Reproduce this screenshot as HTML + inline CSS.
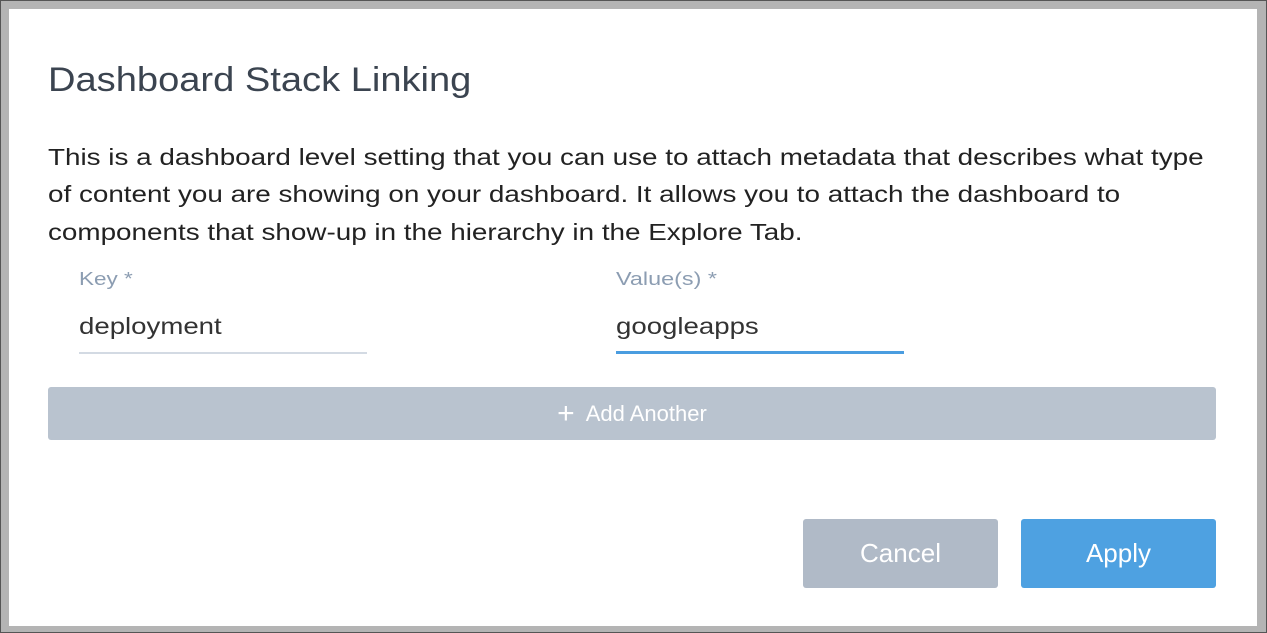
<!DOCTYPE html>
<html><head><style>
html,body{margin:0;padding:0;}
body{width:1267px;height:633px;background:#b4b4b4;position:relative;overflow:hidden;font-family:"Liberation Sans",sans-serif;}
.frame{position:absolute;left:0;top:0;width:1265px;height:631px;border:1px solid #555;}
.dlg{position:absolute;left:9px;top:9px;width:1248px;height:617px;background:#fff;}
.a{position:absolute;white-space:nowrap;transform-origin:0 0;}
</style></head><body>
<div class="frame"></div>
<div class="dlg"></div>
<div class="a" style="left:48px;top:61px;font-size:34px;color:#3b4450;transform:scaleX(1.12);">Dashboard Stack Linking</div>
<div class="a" style="left:48px;top:144px;font-size:23px;color:#222;transform:scaleX(1.21);">This is a dashboard level setting that you can use to attach metadata that describes what type</div>
<div class="a" style="left:48px;top:181px;font-size:23px;color:#222;transform:scaleX(1.21);">of content you are showing on your dashboard. It allows you to attach the dashboard to</div>
<div class="a" style="left:48px;top:219px;font-size:23px;color:#222;transform:scaleX(1.21);">components that show-up in the hierarchy in the Explore Tab.</div>
<div class="a" style="left:79px;top:269px;font-size:18px;color:#8c9db2;transform:scaleX(1.25);">Key *</div>
<div class="a" style="left:616px;top:269px;font-size:18px;color:#8c9db2;transform:scaleX(1.3);">Value(s) *</div>
<div class="a" style="left:79px;top:313px;font-size:23px;color:#333;transform:scaleX(1.2);">deployment</div>
<div class="a" style="left:616px;top:313px;font-size:23px;color:#333;transform:scaleX(1.2);">googleapps</div>
<div class="a" style="left:79px;top:352px;width:288px;height:2px;background:#d3dae3;"></div>
<div class="a" style="left:616px;top:351px;width:288px;height:3px;background:#4a9de0;"></div>
<div class="a" style="left:48px;top:387px;width:1168px;height:53px;background:#b9c3cf;border-radius:3px;color:#fff;font-size:22px;line-height:53px;text-align:center;"><span style="font-size:30px;vertical-align:-2px;">+</span>&nbsp; Add Another</div>
<div class="a" style="left:803px;top:519px;width:195px;height:69px;background:#b0bac7;border-radius:3px;color:#fff;font-size:26px;line-height:69px;text-align:center;">Cancel</div>
<div class="a" style="left:1021px;top:519px;width:195px;height:69px;background:#4ea1e1;border-radius:3px;color:#fff;font-size:26px;line-height:69px;text-align:center;">Apply</div>
</body></html>
